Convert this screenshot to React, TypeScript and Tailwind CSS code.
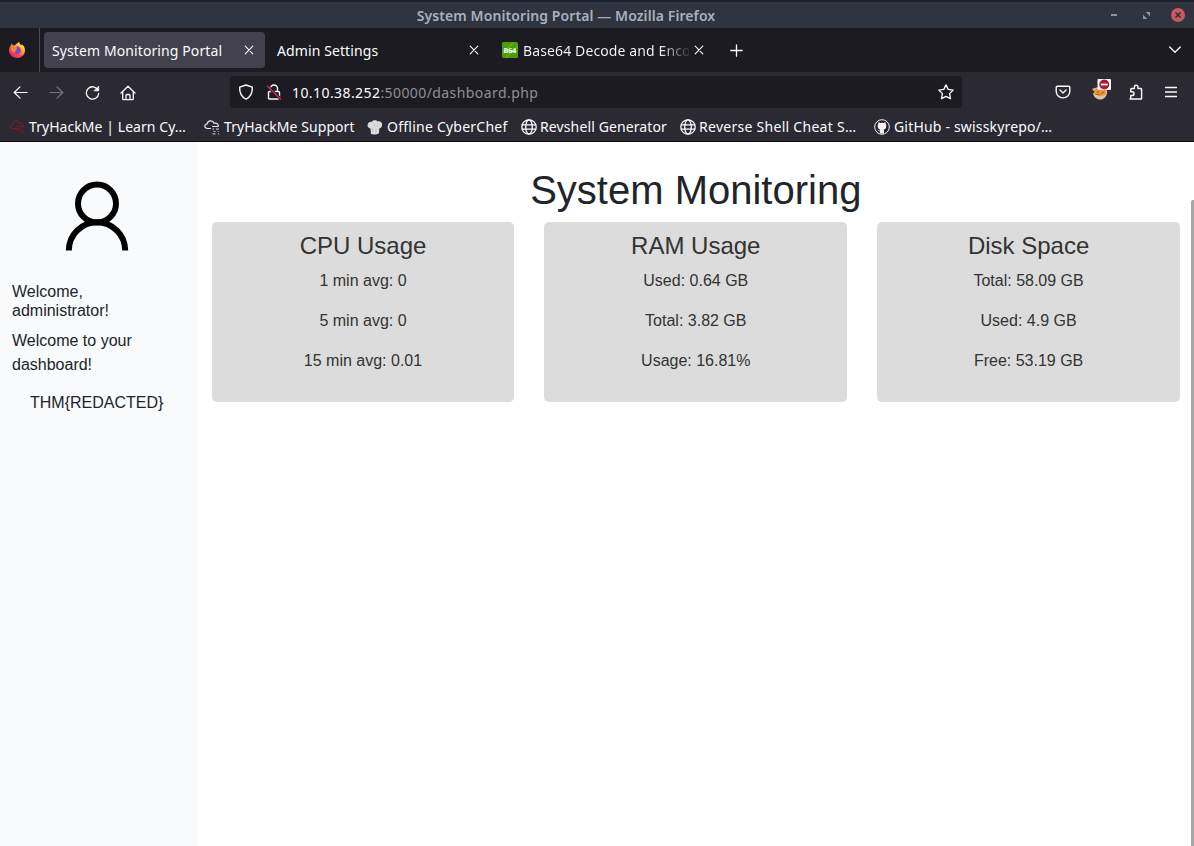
import React from "react";

const UI = "font-['Noto_Sans',sans-serif]";

function Label({ children, className = "" }: { children: React.ReactNode; className?: string }) {
  return <span className={`block shrink-0 whitespace-nowrap leading-5 ${className}`}>{children}</span>;
}

function Icon({ children, className = "size-4", box = "0 0 16 16" }: { children: React.ReactNode; className?: string; box?: string }) {
  return (
    <svg viewBox={box} className={`block shrink-0 ${className}`} fill="none" stroke="currentColor" strokeWidth="1.3" strokeLinecap="round" strokeLinejoin="round">
      {children}
    </svg>
  );
}

function CloseIcon() {
  return (
    <Icon className="size-[10px]" box="0 0 10 10">
      <path d="M1.2 1.2l7.6 7.6M8.8 1.2L1.2 8.8" strokeWidth="1.1" />
    </Icon>
  );
}

function FirefoxLogo() {
  return (
    <svg viewBox="0 0 18 18" className="block size-[18px] shrink-0">
      <defs>
        <linearGradient id="fox" x1="0.85" y1="0.1" x2="0.2" y2="0.95">
          <stop offset="0" stopColor="#fff04a" />
          <stop offset="0.35" stopColor="#ffa52a" />
          <stop offset="0.65" stopColor="#ff4b3e" />
          <stop offset="1" stopColor="#e0228c" />
        </linearGradient>
      </defs>
      <path d="M2.7 4.4C3 3.4 3.6 2.9 4 2.6c0 .8.4 1.4.9 1.8.8-.2 1.6-.1 2.2.1C8 2.8 9.6 1.8 11.200 1c.1 1.500 1 2.300 2 3.300.5-.2.6-.7.6-1.100 2.300 1.500 3.400 4 3.200 6.500-.3 4.300-3.700 7.300-7.900 7.300-4.500 0-8-3.400-8.100-7.700C.9 7.500 1.700 5.700 2.700 4.400z" fill="url(#fox)" />
      <path d="M6 7.300c.9-.1 1.600.2 2.500.6C9.200 6 8.800 5.400 8.200 5c2.600 0 4.600 2.200 4.600 4.600 0 2-1.600 3.600-3.600 3.600-2.300 0-3.900-1.600-3.800-3.400.8.700 1.700.700 2.700.2-.8-.7-2.300-1-2.100-2.700z" fill="#7a45dc" />
      <path d="M3 7c1.500-.9 3-.4 3.800.5 1 .2 1.600.2 2.100.8-.2.900-1.500 1-2 1.600-.4.800.3 1.700 1.400 2-2.700.5-5-1.800-5.300-4.900z" fill="#ff8a1f" />
    </svg>
  );
}

function Globe() {
  return (
    <Icon>
      <circle cx="8" cy="8" r="7.2" />
      <ellipse cx="8" cy="8" rx="3.300" ry="7.2" />
      <path d="M1.300 5.800h13.400M1.300 10.200h13.400" />
    </Icon>
  );
}

function RedCloud() {
  return (
    <Icon className="size-4 text-[#9a1820]">
      <path d="M10 9.800H4C.2 9.600.1 5.500 3.500 5.200 4.300 1.300 9 .9 10.300 4.300c3.200-.7 5.200 2.500 3.200 4.700" strokeWidth="1" />
      <path d="M8.500 7.200h4M9.500 11.700h2M13 11.700h1.500M12 14h2.500" strokeWidth=".8" strokeDasharray="2 1" />
    </Icon>
  );
}

function WhiteCloud() {
  return (
    <Icon className="size-4 text-[#e8e8ec]">
      <path d="M6.500 9.500H3.500C0 9.200 0 5.400 3 5 4 1.200 8.800.8 10 4.200c3-.6 4.800 1.300 4.200 3.300H8.500" strokeWidth="1.2" />
      <path d="M8.500 10.200h1.500M12 10.200h3M9.500 12.500h2M13.500 12.500h1M8.500 14.900h3M14 14.900h1" stroke="#b5b5ba" strokeWidth="1.2" strokeLinecap="butt" />
    </Icon>
  );
}

function ChefHat() {
  return (
    <svg viewBox="0 0 16 16" className="block size-4 shrink-0">
      <path d="M4 15l-.5-5.500C.8 9.300 0 6.500 1 4.800 1.600 3.400 3 2.500 4.500 2.900 5.600.8 9.300.5 10.700 2.400c2.500-.7 4.500.9 4.400 3.100 0 2.300-1 3.700-2.800 4L12 14.200C10 15.600 6 15.700 4 15z" fill="#dcdcdc" />
      <path d="M5.500 9.500l.3 4M9 9.500v4M7 4.500l.8 3M11 5l-1 2.500" stroke="#b9b9b9" strokeWidth=".8" fill="none" />
    </svg>
  );
}

function GithubMark() {
  return (
    <svg viewBox="0 0 16 16" className="block size-4 shrink-0">
      <circle cx="8" cy="8" r="7.300" fill="#242329" stroke="#f2f2f4" strokeWidth="1" />
      <path d="M5.900 14.500v-2.200c-1.800.2-2-1.200-3-1.500 1.300-.4 1.700 1.100 3 .7l.4-1C4.600 10.200 3.700 9.200 3.700 6.900c0-.8.200-1.400.6-1.900-.2-.7-.1-1.300.1-1.800.8 0 1.400.5 1.900.8a7 7 0 013.400 0c.5-.3 1.100-.8 1.900-.8.2.5.3 1.100.1 1.800.4.500.6 1.100.6 1.900 0 2.300-.9 3.300-2.800 3.600.4.400.5.900.5 1.500v2.500z" fill="#f2f2f4" />
    </svg>
  );
}

function Bookmark({ icon, width, gap = "gap-1", tracking, children }: { icon: React.ReactNode; width: string; gap?: string; tracking: string; children: React.ReactNode }) {
  return (
    <div className={`flex shrink-0 items-center ${gap} ${width}`}>
      {icon}
      <Label className={`text-[14px] ${tracking}`}>{children}</Label>
    </div>
  );
}

function TitleBar() {
  return (
    <div className="grid h-[26px] grid-cols-[1fr_auto_1fr] items-center bg-[#2f343f]">
      <span />
      <Label className="pt-0.5 pr-[62px] text-[14px] font-semibold text-[#a9b0bd] tracking-[0.09px]">System Monitoring Portal — Mozilla Firefox</Label>
      <div className="flex items-center justify-end pr-[9px] text-[#8b919d]">
        <span className="mr-[26px] h-[2px] w-[6px] bg-current" />
        <svg viewBox="0 0 8 8" className="mr-[21px] block size-[7px]" fill="currentColor">
          <path d="M3 0h5v5zM0 3v5h5z" />
        </svg>
        <svg viewBox="0 0 14 14" className="block size-[14px]">
          <circle cx="7" cy="7" r="7" fill="#cc575d" />
          <path d="M4.500 4.500l5 5M9.500 4.500l-5 5" stroke="#2f343f" strokeWidth="1.7" />
        </svg>
      </div>
    </div>
  );
}

function TabBar() {
  return (
    <div className="flex h-[44px] items-center bg-[#1c1b22] text-[14px] text-[#fbfbfe]">
      <div className="flex h-full w-[40px] shrink-0 items-center border-r border-[#4a4a52] pl-2">
        <FirefoxLogo />
      </div>
      <div className="ml-1 flex h-9 w-[221px] shrink-0 items-center justify-between rounded bg-[#42414d] pl-2 pr-[11px]">
        <Label className="pt-0.5 tracking-[0.1px]">System Monitoring Portal</Label>
        <CloseIcon />
      </div>
      <div className="flex h-9 w-[225px] shrink-0 items-center justify-between pl-3 pr-[11px]">
        <Label className="pt-0.5 tracking-[0.1px]">Admin Settings</Label>
        <CloseIcon />
      </div>
      <div className="flex h-9 w-[225px] shrink-0 items-center pl-3">
        <svg viewBox="0 0 16 16" className="mr-[5px] block size-4 shrink-0">
          <rect width="16" height="16" rx="1.500" fill="#4a9c0b" />
          <path d="M0 12L12 0M4 16L16 4" stroke="#5bb313" strokeWidth="1.500" />
          <text x="8" y="10.600" textAnchor="middle" fontFamily="DejaVu Sans" fontWeight="bold" fontSize="6.500" textLength="13" fill="#fff">B64</text>
        </svg>
        <div className="mr-[5px] w-[166px] bg-linear-to-r from-[#fbfbfe] from-82% to-[#fbfbfe]/10 bg-clip-text text-transparent">
          <Label className="pt-0.5 tracking-[0.12px]">Base64 Decode and Enco</Label>
        </div>
        <CloseIcon />
      </div>
      <Icon className="ml-[15px] size-[13px]" box="0 0 13 13">
        <path d="M6.500.8v11.400M.8 6.500h11.400" />
      </Icon>
      <Icon className="ml-auto mr-[13px] size-3" box="0 0 12 12">
        <path d="M.7 3l5.300 5.300L11.300 3" />
      </Icon>
    </div>
  );
}

function NavBar() {
  return (
    <div className="flex h-[40px] items-center bg-[#2b2a33] text-[#fbfbfe]">
      <div className="flex w-[230px] shrink-0 items-center gap-[21px] pl-[13px] pt-px">
        <Icon className="size-[15px]"><path d="M15 8H1.500M7.500 2L1.300 8l6.200 6" /></Icon>
        <Icon className="size-[15px] text-[#77767e]"><path d="M1 8h13.500M8.500 2l6.200 6-6.200 6" /></Icon>
        <Icon className="size-[15px]">
          <path d="M13.900 5.500A6.600 6.600 0 1014.600 9" strokeWidth="1.4" />
          <path d="M14.600 1.500v4.700H9.900z" fill="currentColor" strokeWidth=".8" />
        </Icon>
        <Icon className="-ml-px size-4">
          <path d="M1 8l7-6.800L15 8M2.700 6.700v7c0 .6.400 1 1 1h8.600c.6 0 1-.4 1-1v-7M6 14.500v-4c0-.6.400-1 1-1h2c.6 0 1 .4 1 1v4" />
        </Icon>
      </div>
      <div className="flex h-8 w-[732px] shrink-0 items-center rounded bg-[#1c1b22] pl-2 pr-2">
        <Icon>
          <path d="M8 1L14.300 3.200c.3 4.800-1.300 9.300-6.300 12C3 12.500 1.400 8 1.700 3.200z" strokeWidth="1.4" />
        </Icon>
        <Icon className="ml-3 size-4">
          <path d="M4.500 7V4.500a3.500 3.500 0 017 0V7M3.500 7.500h9c.6 0 1 .4 1 1V14c0 .6-.4 1-1 1h-9c-.6 0-1-.4-1-1V8.500c0-.6.400-1 1-1z" strokeWidth="1.400" />
          <path d="M1.800 2.600l12.700 12.300" stroke="#1c1b22" strokeWidth="3" />
          <path d="M1.500 2.300l13 12.600" stroke="#e22850" strokeWidth="1.400" />
        </Icon>
        <Label className="ml-[10px] pt-0.5 text-[14px] text-[#8f8e96] tracking-[0.42px]"><span className="text-[#fbfbfe]">10.10.38.252</span>:50000/dashboard.php</Label>
        <Icon className="ml-auto size-4">
          <path d="M8 .9l2.200 4.500 5 .7-3.600 3.500.9 5L8 12.300l-4.500 2.300.9-5L.8 6.100l5-.7z" />
        </Icon>
      </div>
      <div className="ml-auto flex items-center pr-[17px]">
        <Icon className="mr-5 size-4">
          <path d="M2.500 2.200h11c.7 0 1.300.6 1.300 1.300v3.700c0 3.900-3 6.700-6.800 6.700S1.200 11.100 1.200 7.200V3.500c0-.7.600-1.300 1.300-1.300zM5 6l3 2.900L11 6" strokeWidth="1.4" />
        </Icon>
        <svg viewBox="0 0 20 22" className="-mt-[5px] mr-[17px] block h-[22px] w-5 shrink-0">
          <path d="M1 10c2-.5 5-2.500 9-1.500l6 3c1 4-2 8.500-6 9-4 0-7-2-8-6L4 13z" fill="#d7c4a8" />
          <path d="M3.500 10.500l4-2 7 1.500.5 5.500-5.500 1.500-6-1.500z" fill="#ee942c" />
          <path d="M6 12l2 1.500M10 14.500l3-1.500M4.500 15l4 1" stroke="#9c581b" strokeWidth=".9" />
          <rect x="6.500" y="0" width="13.500" height="11" rx="1" fill="#fff" />
          <circle cx="13.300" cy="5.500" r="5" fill="#b01735" />
          <path d="M9.900 5.500h6.800" stroke="#fff" strokeWidth="1.800" />
        </svg>
        <Icon className="mr-[21px] size-4">
          <path d="M2 15h10.800c.5 0 .8-.3.8-.8V5.300c0-.5-.3-.8-.8-.8H10V3a1.800 1.800 0 00-3.600 0v1.500H3.600c-.5 0-.8.300-.8.800v2.500h1.400a1.800 1.800 0 010 3.700H2.800V14.200c0 .5.300.8.8.8" strokeWidth="1.400" />
        </Icon>
        <Icon className="size-[12px]" box="0 0 12 12">
          <path d="M.5 1.500h11M.5 6h11M.5 10.500h11" />
        </Icon>
      </div>
    </div>
  );
}

function BookmarkBar() {
  return (
    <div className="flex h-[30px] items-center border-b border-[#0c0c0d] bg-[#2b2a33] pl-[9px] text-[#fbfbfe]">
      <Bookmark icon={<RedCloud />} width="w-[195px]" tracking="tracking-[0.06px]">TryHackMe | Learn Cy…</Bookmark>
      <Bookmark icon={<WhiteCloud />} width="w-[163px]" tracking="tracking-[0.06px]">TryHackMe Support</Bookmark>
      <Bookmark icon={<ChefHat />} width="w-[154px]" tracking="tracking-[0.24px]">Offline CyberChef</Bookmark>
      <Bookmark icon={<Globe />} width="w-[159px]" gap="gap-[3px]" tracking="tracking-[0.12px]">Revshell Generator</Bookmark>
      <Bookmark icon={<Globe />} width="w-[194px]" gap="gap-[3px]" tracking="tracking-[0.28px]">Reverse Shell Cheat S…</Bookmark>
      <Bookmark icon={<GithubMark />} width="w-[190px]" tracking="tracking-[0.18px]">GitHub - swisskyrepo/…</Bookmark>
    </div>
  );
}

const cards = [
  { title: "CPU Usage", rows: ["1 min avg: 0", "5 min avg: 0", "15 min avg: 0.01"] },
  { title: "RAM Usage", rows: ["Used: 0.64 GB", "Total: 3.82 GB", "Usage: 16.81%"] },
  { title: "Disk Space", rows: ["Total: 58.09 GB", "Used: 4.9 GB", "Free: 53.19 GB"] },
];

function Dashboard() {
  return (
    <div className="flex min-h-0 flex-1 bg-white font-['Liberation_Sans',Arial,sans-serif] text-base text-[#212529]">
      <aside className="w-[198px] shrink-0 bg-[#f8fafc] px-3 pt-[39px]">
        <svg viewBox="0 0 64 70" className="ml-[53px] block h-[70px] w-16" fill="none" stroke="#000" strokeWidth="6">
          <circle cx="32" cy="22.500" r="19" />
          <path d="M3.800 69.500C3.800 53.500 17 41.200 32 41.200S60.200 53.500 60.200 69.500" />
        </svg>
        <h6 className="mt-[31px] leading-[19.2px]">Welcome,<br />administrator!</h6>
        <p className="mt-[9px] leading-6">Welcome to your<br />dashboard!</p>
        <p className="mt-[14px] pr-2 pl-[18px] leading-6 whitespace-nowrap">THM&#123;REDACTED&#125;</p>
      </aside>
      <main className="flex-1 pt-6 pr-[11px] pl-[13.6px]">
        <h1 className="mb-2 text-center text-[40px] leading-[48px]">System Monitoring</h1>
        <div className="grid grid-cols-3 gap-[30px]">
          {cards.map((card) => (
            <section key={card.title} className="h-[180px] rounded-[5px] bg-[#dcdcdc] pt-[10px] text-center text-[#333]">
              <h4 className="mb-2 text-2xl leading-[28.8px]">{card.title}</h4>
              {card.rows.map((row) => (
                <p key={row} className="mb-4 leading-6">{row}</p>
              ))}
            </section>
          ))}
        </div>
      </main>
      <div className="w-[3px] shrink-0 pt-[58px]">
        <div className="h-full rounded-tl-xs bg-[#a5a7a8]" />
      </div>
    </div>
  );
}

export default function App() {
  return (
    <div className="flex h-[846px] w-[1194px] flex-col overflow-hidden">
      <div className={`shrink-0 ${UI}`}>
        <div className="h-[2px] bg-[#1b222d]" />
        <TitleBar />
        <TabBar />
        <NavBar />
        <BookmarkBar />
      </div>
      <Dashboard />
    </div>
  );
}
